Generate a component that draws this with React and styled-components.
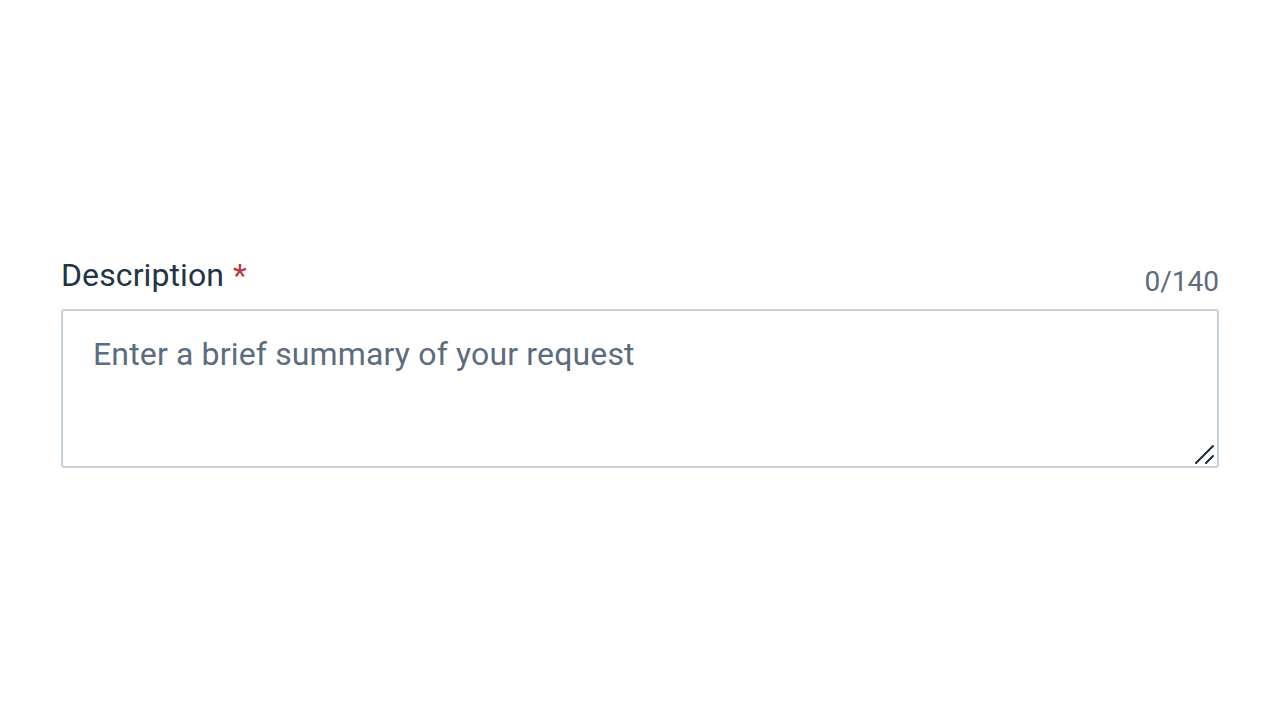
import styled, { createGlobalStyle } from "styled-components";

const GlobalStyle = createGlobalStyle`
    * { box-sizing: border-box; }
    body {
        margin: 0;
        background: #fff;
        font-family: Roboto, "Liberation Sans", sans-serif;
    }
`;

const Page = styled.div`
    min-height: 720px;
    padding: 257px 61px 0;
`;

const Field = styled.div`
    display: flex;
    flex-direction: column;
`;

const LabelRow = styled.div`
    display: flex;
    justify-content: space-between;
    align-items: flex-end;
    margin-bottom: 16px;
`;

const Label = styled.label`
    font-size: 32px;
    color: #243447;
    line-height: 36px;
    letter-spacing: 0.1px;
`;

const Required = styled.span`
    color: #c0343b;
    margin-left: 9px;
`;

const Counter = styled.span`
    font-size: 28px;
    color: #5d6b7a;
    line-height: 28px;
    margin-bottom: -3px;
`;

const InputWrap = styled.div`
    position: relative;
    display: flex;
`;

const TextArea = styled.textarea`
    width: 100%;
    height: 159px;
    border: 2px solid #c6d1dc;
    border-radius: 3px;
    padding: 21px 30px;
    font-family: Roboto, "Liberation Sans", sans-serif;
    font-size: 32px;
    line-height: 44px;
    letter-spacing: 0.15px;
    color: #243447;
    resize: none;
    outline: none;

    &::placeholder {
        color: #5b6c7e;
    }
`;

const Grip = styled.svg`
    position: absolute;
    right: 4px;
    bottom: 4px;
    width: 20px;
    height: 20px;
    pointer-events: none;
`;

function App() {
    return (
        <>
            <GlobalStyle />
            <Page>
                <Field>
                    <LabelRow>
                        <Label htmlFor="description">
                            Description<Required>*</Required>
                        </Label>
                        <Counter>0/140</Counter>
                    </LabelRow>
                    <InputWrap>
                        <TextArea id="description" placeholder="Enter a brief summary of your request" />
                        <Grip viewBox="0 0 20 20">
                            <path d="M1 19 L18 2 M11 19 L18 12" stroke="#1e2a3a" strokeWidth="2" strokeLinecap="round" fill="none" />
                        </Grip>
                    </InputWrap>
                </Field>
            </Page>
        </>
    );
}

export default App;
